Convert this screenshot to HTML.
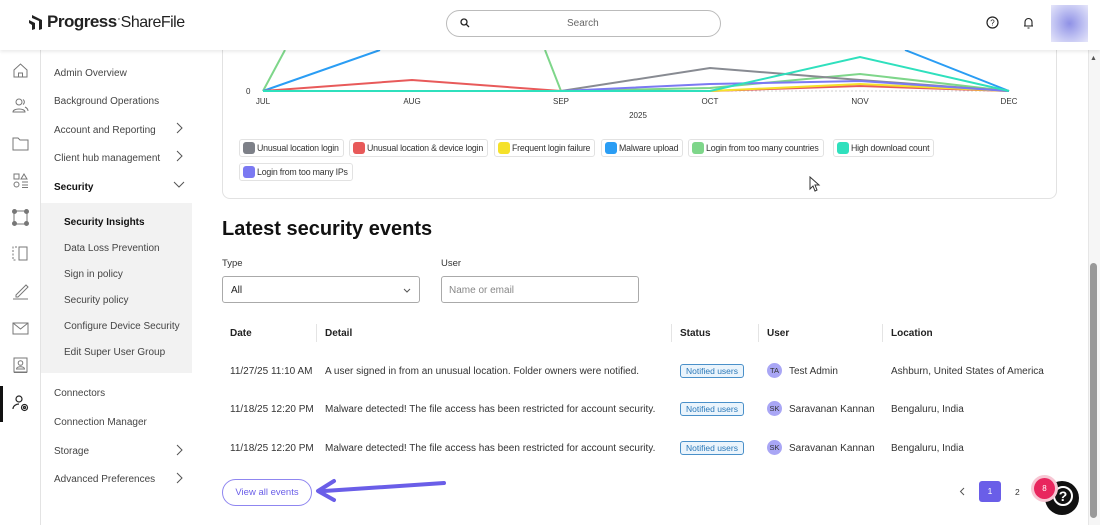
<!DOCTYPE html>
<html><head><meta charset="utf-8"><style>
*{box-sizing:border-box;margin:0;padding:0}
body{width:1100px;height:525px;overflow:hidden;background:#fff;font-family:"Liberation Sans",sans-serif;color:#222;position:relative}
.hdr{position:absolute;left:0;top:0;width:1100px;height:50px;background:#fff;box-shadow:0 2px 3px rgba(0,0,0,.08);z-index:5}
.abs{position:absolute}
.rail{position:absolute;left:0;top:50px;width:41px;height:475px;border-right:1px solid #e3e3e3}
.nav{position:absolute;left:41px;top:50px;width:151px;height:475px}
.nav div{position:absolute;font-size:10px;color:#444}
.sub{position:absolute;left:41px;top:203px;width:151px;height:170px;background:#f2f2f2}
.chev{position:absolute;left:175px}
.card{position:absolute;left:222px;top:40px;width:835px;height:159px;border:1px solid #e2e2e2;border-top:none;border-radius:0 0 8px 8px}
.lg{position:absolute;height:18px;border:1px solid #e2e2e2;border-radius:3px;font-size:8.8px;color:#333;padding:0 4px 0 17px;line-height:16px;white-space:nowrap;letter-spacing:-.2px}
.lg i{position:absolute;left:3px;top:2px;width:12px;height:12px;border-radius:3px}
.th{position:absolute;top:328px;font-size:10px;font-weight:bold;color:#222}
.td{position:absolute;font-size:10px;color:#333;white-space:nowrap}
.badge{position:absolute;left:680px;width:64px;height:14px;border:1px solid #4a90c9;background:#eaf4fc;border-radius:3px;font-size:8.5px;color:#2a78b8;text-align:center;line-height:12px}
.av{position:absolute;left:767px;width:15px;height:15px;border-radius:50%;background:#a9a6f5;font-size:7.5px;text-align:center;line-height:15px;color:#333}
.sep{position:absolute;top:324px;width:1px;height:18px;background:#e4e4e4}
</style></head><body>
<div class="hdr">
 <svg class="abs" style="left:28px;top:13px" width="18" height="18" viewBox="0 0 18 18"><path d="M4 2l10 5v9l-3 1V8L4 5z" fill="#222"/><path d="M1 7l6 3v6l-3 1v-5L1 10z" fill="#222"/></svg>
 <div class="abs" style="left:47px;top:12px;font-size:17px;font-weight:bold;color:#222;letter-spacing:-.5px">Progress<span style="font-weight:normal;font-size:16px">ˑShareFile</span></div>
 <div class="abs" style="left:446px;top:10px;width:275px;height:27px;border:1px solid #bbb;border-radius:14px"></div>
 <svg class="abs" style="left:460px;top:18px" width="10" height="10" viewBox="0 0 10 10"><circle cx="4" cy="4" r="3" stroke="#222" stroke-width="1.3" fill="none"/><path d="M6.2 6.2L9 9" stroke="#222" stroke-width="1.3"/></svg>
 <div class="abs" style="left:567px;top:18px;font-size:10px;color:#666">Search</div>
 <svg class="abs" style="left:986px;top:16px" width="13" height="13" viewBox="0 0 13 13"><circle cx="6.5" cy="6.5" r="5.5" stroke="#222" fill="none" stroke-width="1.2"/><text x="6.5" y="9.5" font-size="8" text-anchor="middle" font-family="Liberation Sans" fill="#222">?</text></svg>
 <svg class="abs" style="left:1023px;top:17px" width="11" height="12" viewBox="0 0 11 12"><path d="M2 9V5a3.5 3.5 0 017 0v4h1H1zM4.5 11h2" stroke="#222" fill="none" stroke-width="1.1"/></svg>
 <div class="abs" style="left:1051px;top:5px;width:37px;height:37px;background:radial-gradient(circle,#8f91e6 0%,#c4c6f3 60%,#e6e6fa 100%)"></div>
</div>
<div class="rail">
 <svg class="abs" style="left:12px;top:12px" width="17" height="17" viewBox="0 0 17 17" fill="none" stroke="#777" stroke-width="1"><path d="M2 8L8.5 2 15 8v7H2z M6.5 15v-4h4v4"/></svg>
 <svg class="abs" style="left:12px;top:48px" width="17" height="15" viewBox="0 0 17 15" fill="none" stroke="#777"><circle cx="7" cy="4" r="3"/><path d="M1 14c0-4 12-4 12 0z M11 1.5a3 3 0 010 5 M13 9c2 1 3 2 3 4"/></svg>
 <svg class="abs" style="left:12px;top:86px" width="17" height="15" viewBox="0 0 17 15" fill="none" stroke="#777"><path d="M1 2h5l2 2h8v10H1z"/></svg>
 <svg class="abs" style="left:13px;top:123px" width="15" height="15" viewBox="0 0 15 15" fill="none" stroke="#777"><rect x="1" y="1" width="5" height="5"/><path d="M11 1l3 5h-6z"/><circle cx="3.5" cy="11.5" r="2.5"/><path d="M9 9h6M9 12h6M9 14.5h6"/></svg>
 <svg class="abs" style="left:12px;top:159px" width="17" height="17" viewBox="0 0 17 17" fill="none" stroke="#777"><rect x="2" y="2" width="13" height="13"/><circle cx="2.5" cy="2.5" r="2" fill="#777"/><circle cx="14.5" cy="2.5" r="2" fill="#777"/><circle cx="2.5" cy="14.5" r="2" fill="#777"/><circle cx="14.5" cy="14.5" r="2" fill="#777"/></svg>
 <svg class="abs" style="left:12px;top:196px" width="17" height="15" viewBox="0 0 17 15" fill="none" stroke="#777"><path d="M5 1h-4v13h4" stroke-dasharray="2 1.5"/><rect x="7" y="1" width="8" height="13"/></svg>
 <svg class="abs" style="left:12px;top:232px" width="17" height="18" viewBox="0 0 17 18" fill="none" stroke="#777"><path d="M4 13L14 3l2 2L6 15H4z M1 17h15"/></svg>
 <svg class="abs" style="left:12px;top:272px" width="17" height="13" viewBox="0 0 17 13" fill="none" stroke="#777"><rect x="1" y="1" width="15" height="11"/><path d="M1 1l7.5 6L16 1"/></svg>
 <svg class="abs" style="left:13px;top:307px" width="15" height="17" viewBox="0 0 15 17" fill="none" stroke="#777"><rect x="1" y="1" width="13" height="14"/><circle cx="7.5" cy="6" r="2.3"/><path d="M3.5 12c0-3 8-3 8 0z M1 15.5h13"/></svg>
 <div class="abs" style="left:0;top:336px;width:3px;height:36px;background:#111"></div>
 <svg class="abs" style="left:12px;top:345px" width="17" height="17" viewBox="0 0 17 17" fill="none" stroke="#222" stroke-width="1.2"><circle cx="7" cy="4" r="3"/><path d="M1 14c0-3 3-5 6-5"/><circle cx="12.5" cy="12.5" r="3"/><circle cx="12.5" cy="12.5" r="1"/></svg>
</div>
<div class="sub"></div>
<div class="nav">
 <div style="left:13px;top:18px">Admin Overview</div>
 <div style="left:13px;top:46px">Background Operations</div>
 <div style="left:13px;top:75px">Account and Reporting</div>
 <div style="left:13px;top:103px">Client hub management</div>
 <div style="left:13px;top:132px;font-weight:bold;color:#111">Security</div>
 <div style="left:23px;top:167px;font-weight:bold;color:#111">Security Insights</div>
 <div style="left:23px;top:193px">Data Loss Prevention</div>
 <div style="left:23px;top:219px">Sign in policy</div>
 <div style="left:23px;top:245px">Security policy</div>
 <div style="left:23px;top:271px">Configure Device Security</div>
 <div style="left:23px;top:297px">Edit Super User Group</div>
 <div style="left:13px;top:338px">Connectors</div>
 <div style="left:13px;top:367px">Connection Manager</div>
 <div style="left:13px;top:396px">Storage</div>
 <div style="left:13px;top:424px">Advanced Preferences</div>
</div>
<svg class="chev" style="top:122px" width="8" height="12" viewBox="0 0 8 12"><path d="M2 1l5 5-5 5" stroke="#555" fill="none"/></svg>
<svg class="chev" style="top:150px" width="8" height="12" viewBox="0 0 8 12"><path d="M2 1l5 5-5 5" stroke="#555" fill="none"/></svg>
<svg class="chev" style="top:180px;left:173px" width="12" height="8" viewBox="0 0 12 8"><path d="M1 2l5 5 5-5" stroke="#555" fill="none"/></svg>
<svg class="chev" style="top:444px" width="8" height="12" viewBox="0 0 8 12"><path d="M2 1l5 5-5 5" stroke="#555" fill="none"/></svg>
<svg class="chev" style="top:472px" width="8" height="12" viewBox="0 0 8 12"><path d="M2 1l5 5-5 5" stroke="#555" fill="none"/></svg>

<div class="card"></div>
<svg class="abs" style="left:222px;top:50px" width="835" height="80" viewBox="222 50 835 80" font-family="Liberation Sans" font-size="8">
 <line x1="263" y1="91" x2="1009" y2="91" stroke="#ccc" stroke-dasharray="2 2"/>
 <text x="246" y="94" fill="#333">0</text>
 <g fill="#333" text-anchor="middle"><text x="263" y="104">JUL</text><text x="412" y="104">AUG</text><text x="561" y="104">SEP</text><text x="710" y="104">OCT</text><text x="860" y="104">NOV</text><text x="1009" y="104">DEC</text><text x="638" y="118">2025</text></g>
 <g fill="none" stroke-width="2">
 <path d="M263 91L285 50 M545 50L561 91L710 88L860 74L1009 91" stroke="#7ed68a"/>
 <path d="M263 91L380 50 M905 50L1009 91" stroke="#2a9df4"/>
 <path d="M263 91L412 80L561 91L710 91L860 86L1009 91" stroke="#e85a5a"/>
 <path d="M710 91L860 84L1009 91" stroke="#f5e12a"/>
 <path d="M561 91L710 68L860 80L1009 91" stroke="#888b92"/>
 <path d="M561 91L710 84L860 81L1009 91" stroke="#7b79f2"/>
 <path d="M263 91L710 91L860 57L1009 91" stroke="#2fe0bd"/>
 </g>
</svg>
<div class="lg" style="left:239px;top:139px"><i style="background:#7d8088"></i>Unusual location login</div>
<div class="lg" style="left:349px;top:139px"><i style="background:#e85a5a"></i>Unusual location &amp; device login</div>
<div class="lg" style="left:494px;top:139px"><i style="background:#f5e12a"></i>Frequent login failure</div>
<div class="lg" style="left:601px;top:139px"><i style="background:#2a9df4"></i>Malware upload</div>
<div class="lg" style="left:688px;top:139px"><i style="background:#7ed68a"></i>Login from too many countries</div>
<div class="lg" style="left:833px;top:139px"><i style="background:#2fe0bd"></i>High download count</div>
<div class="lg" style="left:239px;top:163px"><i style="background:#7b79f2"></i>Login from too many IPs</div>
<svg class="abs" style="left:809px;top:176px" width="12" height="16" viewBox="0 0 12 16"><path d="M1 1v12l3-3 2 5 2-1-2-5h4z" fill="#fff" stroke="#333"/></svg>

<div class="abs" style="left:222px;top:218px;font-size:20px;font-weight:bold;color:#111">Latest security events</div>
<div class="abs" style="left:222px;top:258px;font-size:9.5px;color:#333">Type</div>
<div class="abs" style="left:441px;top:258px;font-size:9.5px;color:#333">User</div>
<div class="abs" style="left:222px;top:276px;width:198px;height:27px;border:1px solid #aaa;border-radius:3px;font-size:10px;padding:8px 8px;color:#222">All<svg style="position:absolute;right:8px;top:11px" width="8" height="5" viewBox="0 0 8 5"><path d="M1 1l3 3 3-3" stroke="#555" fill="none"/></svg></div>
<div class="abs" style="left:441px;top:276px;width:198px;height:27px;border:1px solid #aaa;border-radius:3px;font-size:10px;padding:8px 7px;color:#888">Name or email</div>

<div class="th" style="left:230px">Date</div>
<div class="sep" style="left:316px"></div><div class="th" style="left:325px">Detail</div>
<div class="sep" style="left:671px"></div><div class="th" style="left:680px">Status</div>
<div class="sep" style="left:758px"></div><div class="th" style="left:767px">User</div>
<div class="sep" style="left:882px"></div><div class="th" style="left:891px">Location</div>

<div class="td" style="left:230px;top:366px">11/27/25 11:10 AM</div>
<div class="td" style="left:325px;top:366px">A user signed in from an unusual location. Folder owners were notified.</div>
<div class="badge" style="top:364px">Notified users</div>
<div class="av" style="top:363px">TA</div><div class="td" style="left:789px;top:366px">Test Admin</div>
<div class="td" style="left:891px;top:366px">Ashburn, United States of America</div>

<div class="td" style="left:230px;top:404px">11/18/25 12:20 PM</div>
<div class="td" style="left:325px;top:404px">Malware detected! The file access has been restricted for account security.</div>
<div class="badge" style="top:402px">Notified users</div>
<div class="av" style="top:401px">SK</div><div class="td" style="left:789px;top:404px">Saravanan Kannan</div>
<div class="td" style="left:891px;top:404px">Bengaluru, India</div>

<div class="td" style="left:230px;top:443px">11/18/25 12:20 PM</div>
<div class="td" style="left:325px;top:443px">Malware detected! The file access has been restricted for account security.</div>
<div class="badge" style="top:441px">Notified users</div>
<div class="av" style="top:440px">SK</div><div class="td" style="left:789px;top:443px">Saravanan Kannan</div>
<div class="td" style="left:891px;top:443px">Bengaluru, India</div>

<div class="abs" style="left:222px;top:479px;width:90px;height:27px;border:1px solid #8f86f0;border-radius:14px;font-size:9.5px;color:#6a5ee8;text-align:center;line-height:25px">View all events</div>
<svg class="abs" style="left:312px;top:475px" width="140" height="30" viewBox="0 0 140 30"><path d="M132 8L12 16" stroke="#6a5ee8" stroke-width="4" stroke-linecap="round"/><path d="M22 6L6 16l16 9" stroke="#6a5ee8" stroke-width="4" fill="none" stroke-linecap="round" stroke-linejoin="round"/></svg>

<svg class="abs" style="left:959px;top:487px" width="6" height="9" viewBox="0 0 6 9"><path d="M5 1L1.5 4.5 5 8" stroke="#555" fill="none"/></svg>
<div class="abs" style="left:979px;top:481px;width:22px;height:21px;background:#6a5ee8;border-radius:3px;color:#fff;font-size:8.5px;text-align:center;line-height:21px">1</div>
<div class="abs" style="left:1015px;top:487px;font-size:8.5px;color:#333">2</div>
<div class="abs" style="left:1045px;top:481px;width:34px;height:34px;border-radius:50%;background:#111"></div>
<div class="abs" style="left:1053px;top:486px;width:20px;height:20px;border:2px solid #fff;border-radius:50%;color:#fff;font-size:14px;font-weight:bold;text-align:center;line-height:17px">?</div>
<div class="abs" style="left:1034px;top:478px;width:21px;height:21px;border-radius:50%;background:#e8265e;box-shadow:0 0 0 3px #f7c6d3;color:#fff;font-size:8px;text-align:center;line-height:21px">8</div>

<div class="abs" style="left:1088px;top:50px;width:12px;height:475px;background:#f6f6f6;border-left:1px solid #e6e6e6"></div>
<div class="abs" style="left:1090px;top:55px;font-size:7px;color:#555">▲</div>
<div class="abs" style="left:1090px;top:263px;width:7px;height:255px;background:#999;border-radius:4px"></div>
</body></html>
